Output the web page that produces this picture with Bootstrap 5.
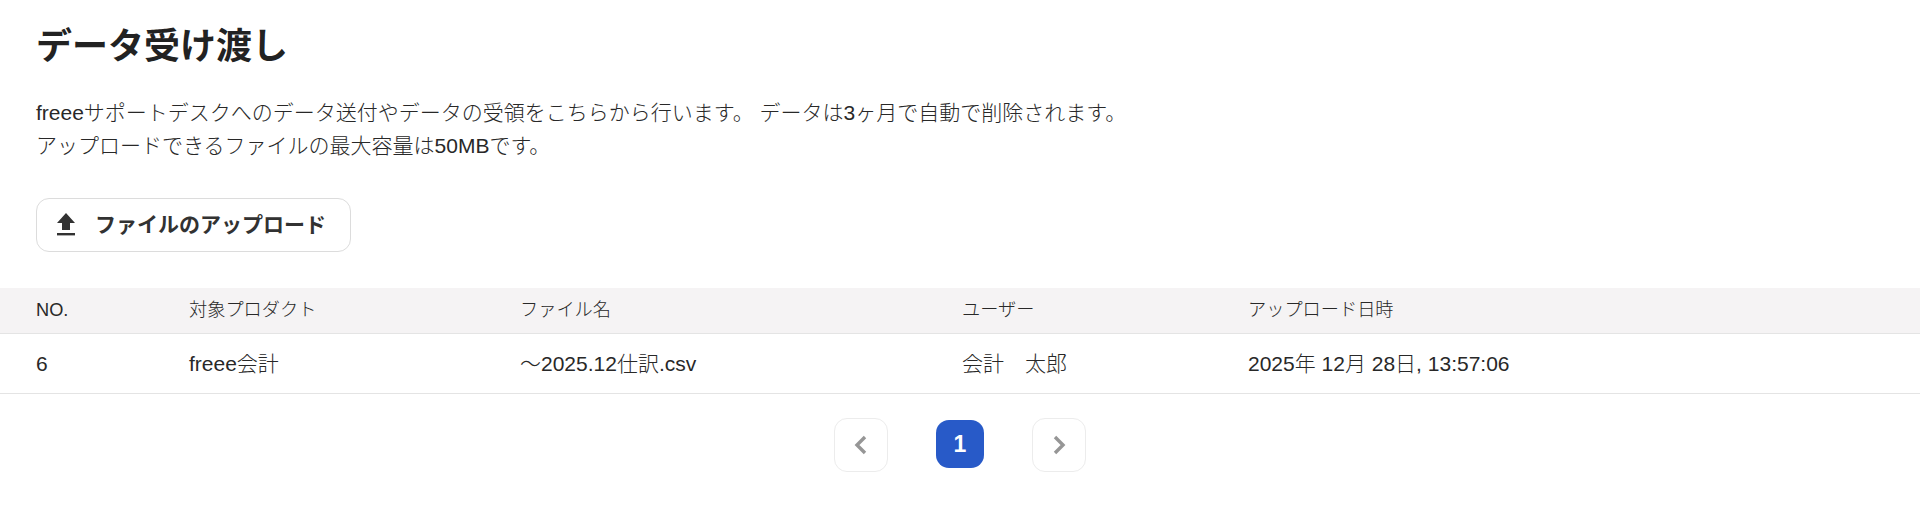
<!DOCTYPE html>
<html lang="ja">
<head>
<meta charset="utf-8">
<title>データ受け渡し</title>
<link rel="stylesheet" href="https://cdn.jsdelivr.net/npm/bootstrap@5.3.0/dist/css/bootstrap.min.css">
<style>
html, body { background: #fff; }
body { font-family: "Liberation Sans", "Noto Sans CJK JP", sans-serif; color: #323232; overflow: hidden; }
.page-head { padding: 26px 36px 0; }
.page-title { font-size: 36px; line-height: 42px; font-weight: 700; color: #222; margin: 0 0 29px; }
.intro-text { font-size: 21px; line-height: 32.5px; font-weight: 300; color: #282828; margin: 0 0 36px; }
.upload-btn { display: inline-flex; align-items: center; gap: 19px; height: 54px; width: 315px; padding: 0 19px; border: 1px solid #dcdcdc; border-radius: 13px; background: #fff; color: #323232; font-size: 21px; font-weight: 700; }
.upload-btn:hover { background: #fff; border-color: #dcdcdc; color: #323232; }
.file-table { margin: 36px 0 0; table-layout: fixed; width: 100%; }
.file-table > :not(caption) > * > * { border-bottom: 1px solid #e4e4e4; box-shadow: none; padding: 0; vertical-align: middle; color: #282828; font-weight: 300; }
.file-table th { background: #f5f3f4; font-size: 18.2px; height: 45px; }
.file-table > tbody > tr > td { font-size: 21px; height: 60px; padding-top: 1px; }
.file-table th:first-child, .file-table > tbody > tr > td:first-child { padding-left: 36px; }
.col-a { width: 189px; } .col-b { width: 331px; } .col-c { width: 442px; } .col-d { width: 286px; }
.pager { gap: 48px; margin-top: 24px; align-items: center; }
.pager-btn { width: 54px; height: 54px; border: 1px solid #ececec; border-radius: 13px; background: #fff; padding: 0; }
.pager-now { width: 48px; height: 48px; margin-bottom: 2px; padding-top: 2px; border-radius: 13px; background: #285ac8; color: #fff; font-size: 23px; font-weight: 700; }
</style>
</head>
<body>
<div class="page-head">
  <h1 class="page-title">データ受け渡し</h1>
  <p class="intro-text">freeeサポートデスクへのデータ送付やデータの受領をこちらから行います。 データは3ヶ月で自動で削除されます。<br>アップロードできるファイルの最大容量は50MBです。</p>
  <button type="button" class="btn upload-btn">
    <svg width="20" height="24" viewBox="0 1 20 24" aria-hidden="true"><path fill="#323232" d="M10 1 19 11H14V18H6V11H1Z"/><rect x="1" y="21" width="18" height="2.4" fill="#323232"/></svg>
    <span>ファイルのアップロード</span>
  </button>
</div>
<table class="table file-table">
  <colgroup><col class="col-a"><col class="col-b"><col class="col-c"><col class="col-d"><col></colgroup>
  <thead>
    <tr><th>NO.</th><th>対象プロダクト</th><th>ファイル名</th><th>ユーザー</th><th>アップロード日時</th></tr>
  </thead>
  <tbody>
    <tr><td>6</td><td>freee会計</td><td>～2025.12仕訳.csv</td><td>会計　太郎</td><td>2025年 12月 28日, 13:57:06</td></tr>
  </tbody>
</table>
<nav class="d-flex justify-content-center pager" aria-label="ページ送り">
  <button type="button" class="btn pager-btn d-flex align-items-center justify-content-center" aria-label="前へ">
    <svg width="14" height="20" viewBox="0 0 14 20" aria-hidden="true"><path d="M11 2 3 10l8 8" fill="none" stroke="#969696" stroke-width="3.4"/></svg>
  </button>
  <span class="pager-now d-flex align-items-center justify-content-center">1</span>
  <button type="button" class="btn pager-btn d-flex align-items-center justify-content-center" aria-label="次へ">
    <svg width="14" height="20" viewBox="0 0 14 20" aria-hidden="true"><path d="M3 2l8 8-8 8" fill="none" stroke="#969696" stroke-width="3.4"/></svg>
  </button>
</nav>
<script src="https://cdn.jsdelivr.net/npm/bootstrap@5.3.0/dist/js/bootstrap.bundle.min.js"></script>
</body>
</html>
